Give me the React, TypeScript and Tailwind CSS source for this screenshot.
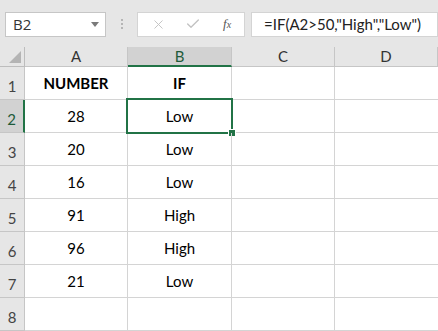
import { X, Check } from "lucide-react";

const rows = [
  { a: "NUMBER", b: "IF", bold: true },
  { a: "28", b: "Low" },
  { a: "20", b: "Low" },
  { a: "16", b: "Low" },
  { a: "91", b: "High" },
  { a: "96", b: "High" },
  { a: "21", b: "Low" },
  { a: "", b: "" },
];

const cols = ["A", "B", "C", "D"];

export default function App() {
  return (
    <div className="w-[438px] h-[331px] overflow-hidden bg-white font-['Lato','Open_Sans',sans-serif] text-[#222]">
      {/* Formula bar */}
      <div className="h-[47px] bg-[#e6e6e6] flex items-center pl-[5px] pt-[1px]">
        <div className="w-[101px] h-[25px] bg-white border border-[#c6c6c6] flex items-center justify-between pl-[7px] pr-[6px]">
          <span className="text-[15px] font-['Open_Sans',sans-serif] text-[#333]">B2</span>
          <svg width="8" height="5" viewBox="0 0 8 5">
            <path d="M0 0h8L4 5z" fill="#7a7a7a" />
          </svg>
        </div>
        <div className="w-[31px] flex flex-col items-center gap-[2px]">
          <span className="w-[2px] h-[2px] bg-[#b5b5b5]" />
          <span className="w-[2px] h-[2px] bg-[#b5b5b5]" />
          <span className="w-[2px] h-[2px] bg-[#b5b5b5]" />
        </div>
        <div className="w-[108px] h-[25px] bg-white border border-[#d4d4d4] flex items-center pl-[13px]">
          <X size={15} strokeWidth={1.5} className="text-[#c2c2c2]" />
          <Check size={16} strokeWidth={2} className="text-[#c2c2c2] ml-[19px]" />
          <span className="ml-[22px] text-[13px] italic font-['Liberation_Serif',serif] text-[#555]">
            f<span className="text-[10px]">x</span>
          </span>
        </div>
        <div className="ml-[6px] flex-1 h-[25px] bg-white border border-[#d4d4d4] flex items-center pl-[12px]">
          <span className="text-[15px] text-[#222]">=IF(A2&gt;50,"High","Low")</span>
        </div>
      </div>

      {/* Sheet */}
      <div className="grid grid-cols-[25px_103px_104px_103px_1fr] grid-rows-[20px_repeat(8,33px)]">
        {/* corner */}
        <div className="bg-[#e6e6e6] border-r border-b border-[#bdbdbd] flex items-end justify-end pr-[3px] pb-[3px]">
          <svg width="12" height="12" viewBox="0 0 12 12">
            <path d="M12 0V12H0z" fill="#b4b4b4" />
          </svg>
        </div>
        {cols.map((c) =>
          c === "B" ? (
            <div
              key={c}
              className="bg-[#d2d2d2] border-r border-[#c6c6c6] border-b-2 border-b-[#217346] flex items-center justify-center text-[15px] text-[#1e5b3a]"
            >
              {c}
            </div>
          ) : (
            <div
              key={c}
              className="bg-[#e6e6e6] border-r border-b border-[#c6c6c6] flex items-center justify-center text-[15px] text-[#333]"
            >
              {c}
            </div>
          )
        )}

        {rows.map((r, i) => {
          const active = i === 1;
          return (
            <div key={i} className="contents">
              <div
                className={
                  active
                    ? "bg-[#d2d2d2] border-r-2 border-r-[#217346] border-b border-b-[#c6c6c6] flex items-end justify-center pb-[2px] text-[15px] text-[#1e5b3a]"
                    : "bg-[#e6e6e6] border-r border-b border-[#c6c6c6] flex items-end justify-center pb-[2px] text-[15px] text-[#444]"
                }
              >
                {i + 1}
              </div>
              <div
                className={`border-r border-b border-[#d4d4d4] flex items-center justify-center pt-[1px] text-[15px] text-black ${
                  r.bold ? "font-bold" : ""
                }`}
              >
                {r.a}
              </div>
              <div
                className={`relative border-r border-b border-[#d4d4d4] flex items-center justify-center pt-[1px] text-[15px] text-black ${
                  r.bold ? "font-bold" : ""
                }`}
              >
                {r.b}
                {active && (
                  <>
                    <div className="absolute left-[-2px] top-[-2px] right-[-2px] bottom-[-2px] border-2 border-[#217346]" />
                    <div className="absolute right-[-5px] bottom-[-5px] w-[8px] h-[8px] bg-[#217346] border border-white" />
                  </>
                )}
              </div>
              <div className="border-r border-b border-[#d4d4d4]" />
              <div className="border-b border-[#d4d4d4]" />
            </div>
          );
        })}
      </div>
    </div>
  );
}
